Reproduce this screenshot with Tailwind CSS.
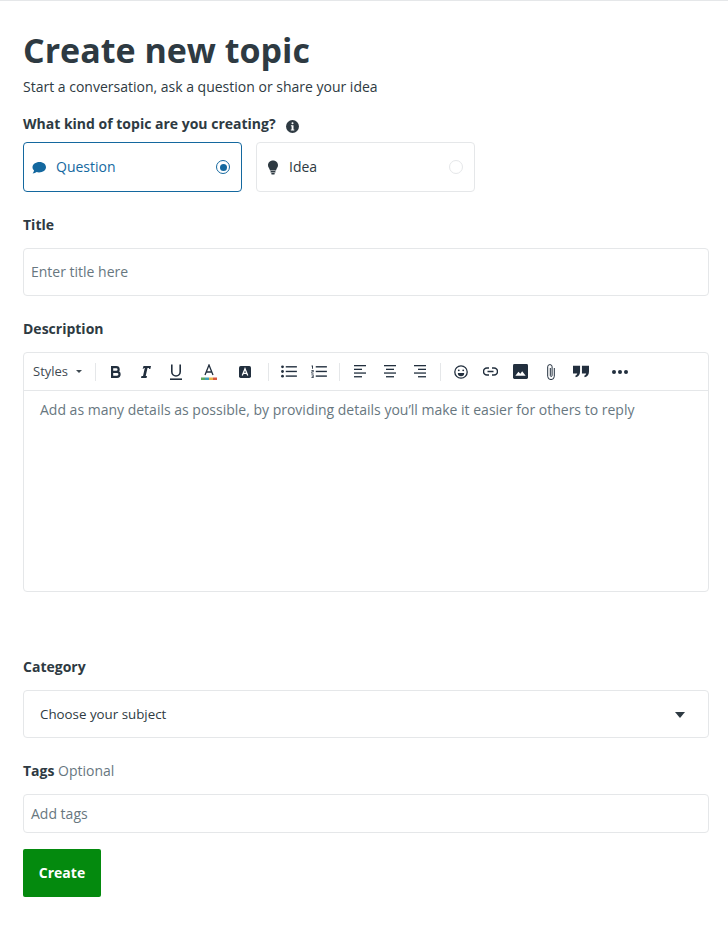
<!DOCTYPE html>
<html lang="en">
<head>
  <meta charset="UTF-8" />
  <title>Create new topic</title>
  <script src="https://cdn.jsdelivr.net/npm/@tailwindcss/browser@4"></script>
</head>
<body class="bg-white font-['Open_Sans',sans-serif] text-[#2e3a42]">
  <div class="h-[937px] overflow-hidden border-t border-[#e5e7e9] px-[23px] pr-[19px]">

    <!-- Heading -->
    <h1 class="mt-[25px] text-[34px] leading-[48px] font-bold">Create new topic</h1>
    <p class="text-sm leading-5 mt-[3px]">Start a conversation, ask a question or share your idea</p>

    <!-- Topic type -->
    <div class="mt-[17px] flex items-center h-5 text-sm font-bold">
      What kind of topic are you creating?
      <svg class="ml-[10px] mt-[4px]" width="13" height="13" viewBox="0 0 13 13"><circle cx="6.5" cy="6.5" r="6.5" fill="#2e3a42"/><rect x="5.5" y="2.2" width="2" height="2" rx="1" fill="#fff"/><path d="M4.9 5.3h2.6v4.2h.8v1H4.8v-1h.8V6.3h-.7z" fill="#fff"/></svg>
    </div>
    <div class="mt-[8px] flex gap-[14px]">
      <div class="w-[219px] h-[50px] rounded border border-[#14689f] flex items-center pl-[8px] pr-[11px] text-sm text-[#14689f]">
        <svg class="mt-[2px]" width="15" height="14" viewBox="0 0 15 14" fill="#14689f"><path d="M7.5 1C3.6 1 .5 3.3.5 6.2c0 1.3.6 2.400 1.600 3.300-.2.9-.8 1.900-1.500 2.900 1.600 0 3-.6 4-1.400.8.2 1.600.4 2.400.4 3.900 0 7-2.300 7-5.200S11.400 1 7.500 1z"/></svg>
        <span class="ml-[9px]">Question</span>
        <span class="ml-auto w-[14px] h-[14px] rounded-full border border-[#14689f] flex items-center justify-center"><span class="w-[7px] h-[7px] rounded-full bg-[#14689f]"></span></span>
      </div>
      <div class="w-[219px] h-[50px] rounded border border-[#e5e7e9] flex items-center pl-[10px] pr-[11px] text-sm">
        <svg width="12" height="15" viewBox="0 0 12 15" fill="#2e3a42"><path d="M6 .5C3 .5 1 2.700 1 5.200c0 2.100 1.500 3.100 2 5.300h6c.5-2.200 2-3.200 2-5.300C11 2.700 9 .5 6 .5z"/><rect x="3.500" y="11" width="5" height="1.500" rx=".5"/><rect x="4.200" y="13" width="3.600" height="1.500" rx=".7"/></svg>
        <span class="ml-[10px]">Idea</span>
        <span class="ml-auto w-[14px] h-[14px] rounded-full border border-[#e5e7e9]"></span>
      </div>
    </div>

    <!-- Title -->
    <div class="mt-[23px] h-5 leading-5 text-sm font-bold">Title</div>
    <div class="mt-[13px] h-[48px] rounded border border-[#e5e7e9] flex items-center pl-[7px] text-sm text-[#68777f]">Enter title here</div>

    <!-- Description -->
    <div class="mt-[23px] h-5 leading-5 text-sm font-bold">Description</div>
    <div class="mt-[13px] h-[240px] rounded border border-[#e5e7e9]">
      <div class="h-[38px] border-b border-[#e5e7e9] flex items-center text-[#222f3e]">
        <span class="ml-[9px] text-[13px] w-[36px] text-[#3f4a52]">Styles</span>
        <svg class="ml-[7px]" width="6" height="3" viewBox="0 0 6 3"><path d="M0 0h6L3 3z" fill="#3f4a52"/></svg>
        <span class="ml-[13px] w-px h-[18px] bg-[#e5e7e9]"></span>

        <svg class="ml-[15px]" width="10" height="12" viewBox="0 0 10 12" fill="none" stroke="#222f3e" stroke-width="2.200"><path d="M1.100 1.100h4.200a2.300 2.300 0 0 1 0 4.700H1.100zM1.100 5.800h4.900a2.500 2.500 0 0 1 0 5.100H1.100z"/></svg>
        <svg class="ml-[20px]" width="10" height="12" viewBox="0 0 10 12" fill="#222f3e"><path d="M2.500 0H10L9.300 3H8L8.200 2H6.500L4.700 10H6L5.500 12H0L.5 10H2L3.800 2H2.700L2.400 3H1.700z"/></svg>
        <svg class="ml-[19px]" width="12" height="16" viewBox="0 0 12 16" fill="none" stroke="#222f3e" stroke-width="1.600"><path d="M1.800 .5v7.300a4.200 4.200 0 0 0 8.400 0V.5"/><path d="M0 15.200h12"/></svg>
        <svg class="ml-[19px]" width="16" height="16" viewBox="0 0 16 16"><path d="M4 11L8 1l4 10M5.400 8h5.200" fill="none" stroke="#222f3e" stroke-width="1.300"/><rect x="0" y="13.500" width="4" height="2.500" fill="#5fa85d"/><rect x="4" y="13.500" width="4" height="2.500" fill="#3f9fb5"/><rect x="8" y="13.500" width="4" height="2.500" fill="#e9b44c"/><rect x="12" y="13.500" width="4" height="2.500" fill="#d9583f"/></svg>
        <svg class="ml-[22px]" width="12" height="12" viewBox="0 0 14 14"><rect width="14" height="14" rx="2" fill="#222f3e"/><path d="M3.800 11L7 3.200 10.200 11M5 8.500h4" fill="none" stroke="#fff" stroke-width="1.500"/></svg>
        <span class="ml-[17px] w-px h-[18px] bg-[#e5e7e9]"></span>

        <svg class="ml-[12px]" width="16" height="13" viewBox="0 0 17 14" fill="#222f3e"><circle cx="1.500" cy="2" r="1.500"/><circle cx="1.500" cy="7" r="1.500"/><circle cx="1.500" cy="12" r="1.500"/><rect x="5" y="1.200" width="12" height="1.500"/><rect x="5" y="6.200" width="12" height="1.500"/><rect x="5" y="11.200" width="12" height="1.500"/></svg>
        <svg class="ml-[14px]" width="16" height="13" viewBox="0 0 17 14" fill="#222f3e"><path d="M.5.500h1.500v3.500H1V1.500H.5zM.3 5.500h2.400v2.200H1.200v.8h1.500v.7H.3V7h1.500v-.8H.3zM.3 10.300h2.400V14H.3v-.7h1.500v-.8H.8v-.7h1v-.8H.3z"/><rect x="5" y="1.200" width="12" height="1.500"/><rect x="5" y="6.200" width="12" height="1.500"/><rect x="5" y="11.200" width="12" height="1.500"/></svg>
        <span class="ml-[12px] w-px h-[18px] bg-[#e5e7e9]"></span>

        <svg class="ml-[14px]" width="12" height="13" viewBox="0 0 12 13" fill="#222f3e"><rect y="0" width="12" height="1.300"/><rect y="3.700" width="8" height="1.300"/><rect y="7.400" width="12" height="1.300"/><rect y="11.100" width="8" height="1.300"/></svg>
        <svg class="ml-[18px]" width="12" height="13" viewBox="0 0 12 13" fill="#222f3e"><rect y="0" width="12" height="1.300"/><rect x="2" y="3.700" width="8" height="1.300"/><rect y="7.400" width="12" height="1.300"/><rect x="2" y="11.100" width="8" height="1.300"/></svg>
        <svg class="ml-[18px]" width="12" height="13" viewBox="0 0 12 13" fill="#222f3e"><rect y="0" width="12" height="1.300"/><rect x="4" y="3.700" width="8" height="1.300"/><rect y="7.400" width="12" height="1.300"/><rect x="4" y="11.100" width="8" height="1.300"/></svg>
        <span class="ml-[14px] w-px h-[18px] bg-[#e5e7e9]"></span>

        <svg class="ml-[13px]" width="14" height="14" viewBox="0 0 14 14" fill="none" stroke="#222f3e" stroke-width="1.300"><circle cx="7" cy="7" r="6.200"/><circle cx="4.800" cy="5.300" r=".9" fill="#222f3e" stroke="none"/><circle cx="9.200" cy="5.300" r=".9" fill="#222f3e" stroke="none"/><path d="M3.800 8h6.400a3.200 3.200 0 0 1-6.400 0z" fill="#222f3e" stroke="none"/></svg>
        <svg class="ml-[15px]" width="15" height="9" viewBox="0 0 15 9" fill="none" stroke="#222f3e" stroke-width="1.500"><path d="M6 1H4a3.300 3.300 0 0 0 0 7h2M9 1h2a3.300 3.300 0 0 1 0 7H9M4.500 4.500h6"/></svg>
        <svg class="ml-[15px]" width="15" height="15" viewBox="0 0 16 16"><rect width="16" height="16" rx="1.500" fill="#222f3e"/><path d="M2.500 12.500l3.300-4.300 2 2.300 2-2.800 3.700 4.800z" fill="#fff"/></svg>
        <svg class="ml-[19px]" width="8" height="16" viewBox="0 0 8 16" fill="none" stroke="#222f3e" stroke-width="1"><path d="M7.300 4v8.300a3.300 3.300 0 0 1-6.600 0V2.800a2.200 2.200 0 0 1 4.400 0v8.700a.9.900 0 0 1-1.800 0V4"/></svg>
        <svg class="ml-[18px]" width="16" height="13" viewBox="0 0 17 13" fill="#222f3e"><path d="M0 .5h7.500v6c0 3-1.500 5.300-4.500 6l-.7-1.500c1.300-.5 2-1.500 2.200-2.500H0zM9.500.5H17v6c0 3-1.500 5.300-4.500 6l-.7-1.500c1.300-.5 2-1.500 2.200-2.500H9.500z"/></svg>
        <svg class="ml-[23px]" width="16" height="4" viewBox="0 0 16 4" fill="#222f3e"><circle cx="2" cy="2" r="2"/><circle cx="8" cy="2" r="2"/><circle cx="14" cy="2" r="2"/></svg>
      </div>
      <p class="pl-4 pt-[9px] text-sm leading-5 text-[#68777f]">Add as many details as possible, by providing details you’ll make it easier for others to reply</p>
    </div>

    <!-- Category -->
    <div class="mt-[65px] h-5 leading-5 text-sm font-bold">Category</div>
    <div class="mt-[13px] h-[48px] rounded border border-[#e5e7e9] flex items-center pl-4 pt-[1px] pr-[23px] text-[13.33px]">
      Choose your subject
      <svg class="ml-auto" width="10" height="6" viewBox="0 0 10 6"><path d="M0 0h10L5 6z" fill="#2e3a42"/></svg>
    </div>

    <!-- Tags -->
    <div class="mt-[23px] h-5 leading-5 text-sm"><span class="font-bold">Tags</span> <span class="text-[#68777f]">Optional</span></div>
    <div class="mt-[13px] h-[39px] rounded border border-[#e5e7e9] flex items-center pl-[7px] text-sm text-[#68777f]">Add tags</div>

    <button class="mt-[16px] w-[78px] h-[48px] rounded-[2px] bg-[#048a0e] text-white text-sm font-bold">Create</button>
  </div>
</body>
</html>
